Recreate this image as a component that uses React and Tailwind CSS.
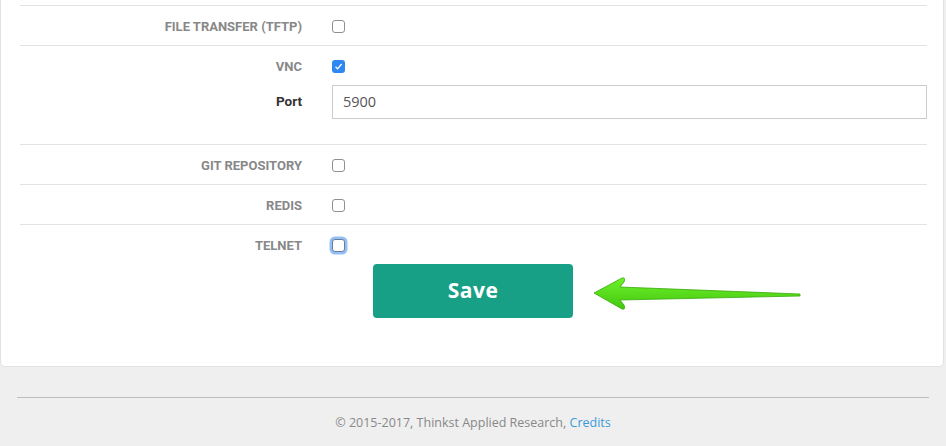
import React from "react";

function Box({ checked, focus }) {
  if (checked) {
    return (
      <span className="inline-flex w-[13px] h-[13px] rounded-[3px] bg-[#2f87f0] items-center justify-center">
        <svg width="9" height="9" viewBox="0 0 9 9">
          <path d="M1.5 4.8 L3.6 6.8 L7.6 2" stroke="#fff" strokeWidth="1.3" fill="none" />
        </svg>
      </span>
    );
  }
  if (focus) {
    return (
      <span className="inline-block w-[13px] h-[13px] rounded-[3px] border border-[#6b7d99] bg-white shadow-[0_0_0_2.5px_#93bff5]" />
    );
  }
  return <span className="inline-block w-[13px] h-[13px] rounded-[3px] border border-[#8f8f8f] bg-white" />;
}

function Row({ label, checked, focus }) {
  return (
    <div className="flex items-center h-[40px] border-t border-[#e3e3e3]">
      <div className="w-[282px] text-right text-[13px] font-bold text-[#888] leading-none pt-[2px] font-['Roboto',sans-serif]">
        {label}
      </div>
      <div className="ml-[30px] flex items-center pt-[2px]">
        <Box checked={checked} focus={focus} />
      </div>
    </div>
  );
}

export default function App() {
  return (
    <div className="w-[946px] h-[446px] bg-[#efefef] overflow-hidden font-['Open_Sans',sans-serif]">
      <div className="w-[944px] h-[367px] bg-white border-x border-b border-[#e2e2e2] rounded-b-[5px] pl-[19px] pr-[16px] pt-[5px]">
        <Row label="FILE TRANSFER (TFTP)" />
        <div className="border-t border-[#e3e3e3] pb-[25px]">
          <div className="flex items-center h-[39px]">
            <div className="w-[282px] text-right text-[13px] font-bold text-[#888] leading-none pt-[2px] font-['Roboto',sans-serif]">
              VNC
            </div>
            <div className="ml-[30px] flex items-center pt-[2px]">
              <Box checked />
            </div>
          </div>
          <div className="flex items-center h-[34px]">
            <div className="w-[282px] text-right text-[13.5px] font-bold text-[#333] leading-none font-['Roboto',sans-serif]">
              Port
            </div>
            <div className="ml-[30px] flex-1 h-[34px] border border-[#ccc] flex items-center pl-[10px] text-[14.5px] text-[#555]">
              5900
            </div>
          </div>
        </div>
        <Row label="GIT REPOSITORY" />
        <Row label="REDIS" />
        <Row label="TELNET" focus />
        <div className="flex items-center">
          <button className="ml-[353px] w-[200px] h-[54px] rounded-[4px] bg-[#17a086] text-white text-[21px] font-bold tracking-[0.5px] flex items-center justify-center">
            Save
          </button>
          <svg width="212" height="40" viewBox="0 0 212 40" className="ml-[19px]">
            <defs>
              <linearGradient id="g" x1="0" y1="0" x2="0" y2="1">
                <stop offset="0" stopColor="#6ef02a" />
                <stop offset="1" stopColor="#43c80e" />
              </linearGradient>
            </defs>
            <path
              d="M2 22 L30 7 Q34 6 32 11 L28 16 L208 23 L208 25 L28 29 L32 34 Q34 39 30 38 Z"
              fill="url(#g)"
              stroke="#3aa80c"
              strokeWidth="0.8"
              strokeLinejoin="round"
            />
          </svg>
        </div>
      </div>
      <div className="mx-[17px] mt-[30px] border-t border-[#bdbdbd]" />
      <div className="text-center mt-[16px] text-[12.5px] text-[#888]">
        © 2015-2017, Thinkst Applied Research, <span className="text-[#3a9ad9]">Credits</span>
      </div>
    </div>
  );
}
